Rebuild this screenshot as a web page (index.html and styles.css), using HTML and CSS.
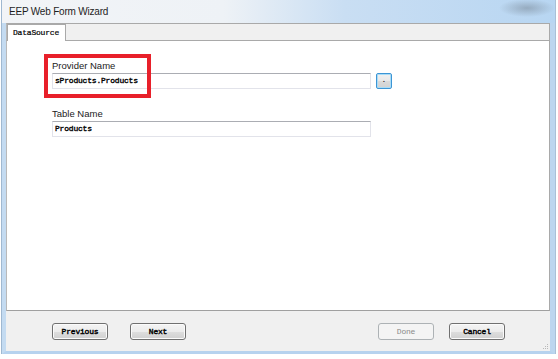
FILE: index.html
```html
<!DOCTYPE html>
<html>
<head>
<meta charset="utf-8">
<link rel="stylesheet" href="styles.css">
</head>
<body>
<div class="window">
  <div class="titlebar">
    <span class="title">EEP Web Form Wizard</span>
    <span class="controls"></span>
  </div>
  <div class="client">
    <div class="tabs">
      <div class="tab">DataSource</div>
    </div>
    <div class="panel">
      <div class="field">
        <div class="label">Provider Name</div>
        <div class="row">
          <div class="input">sProducts.Products</div>
          <div class="dots">.</div>
        </div>
      </div>
      <div class="field second">
        <div class="label">Table Name</div>
        <div class="row">
          <div class="input">Products</div>
        </div>
      </div>
      <div class="highlight"></div>
    </div>
    <div class="footer">
      <div class="group">
        <div class="btn">Previous</div>
        <div class="btn next">Next</div>
      </div>
      <div class="group">
        <div class="btn disabled">Done</div>
        <div class="btn cancel">Cancel</div>
      </div>
      <svg class="grip" width="7" height="7" viewBox="0 0 7 7">
        <rect x="5" y="1" width="1" height="1" fill="#b8b8b8"/>
        <rect x="3" y="3" width="1" height="1" fill="#b8b8b8"/>
        <rect x="5" y="3" width="1" height="1" fill="#b8b8b8"/>
        <rect x="1" y="5" width="1" height="1" fill="#b8b8b8"/>
        <rect x="3" y="5" width="1" height="1" fill="#b8b8b8"/>
        <rect x="5" y="5" width="1" height="1" fill="#b8b8b8"/>
      </svg>
    </div>
  </div>
</div>
</body>
</html>
```
FILE: styles.css
```css
html, body {
  margin: 0;
  padding: 0;
  background: #ffffff;
}

.window {
  box-sizing: border-box;
  margin-left: 2px;
  width: 553px;
  height: 354px;
  display: flex;
  flex-direction: column;
  border-left: 4px solid #c4dbf1;
  border-right: 5px solid #bcd6ef;
  border-bottom: 3px solid #b6d2ee;
  box-shadow: -1px 0 0 #9fb8d1, 1px 0 0 #a9c0d6, 0 1px 0 #9fb8d1;
  background: linear-gradient(to right, #eef1f5 0%, #eef1f5 45%, #cfe2f4 70%, #bcd8f2 100%);
}

.titlebar {
  position: relative;
  height: 23px;
  margin-left: -4px;
  margin-right: -5px;
  padding-left: 7px;
  display: flex;
  align-items: center;
  background:
    radial-gradient(ellipse 28px 9px at 525px 8px, rgba(120,135,150,0.55), rgba(120,135,150,0) 100%),
    linear-gradient(to right, #f2f4f7 0%, #eef2f6 40%, #c9def3 62%, #b8d6f2 100%);
}

.title {
  font-family: "Liberation Sans", Arial, sans-serif;
  font-size: 10px;
  letter-spacing: -0.2px;
  color: #1e1e1e;
  margin-top: -1px;
}

.client {
  flex: 1;
  display: flex;
  flex-direction: column;
  background: #f0f0f0;
}

.tabs {
  box-sizing: border-box;
  height: 18px;
  border-top: 1px solid #a9a9a9;
  border-left: 1px solid #b9b9b9;
  border-right: 1px solid #a9a9a9;
  border-bottom: 1px solid #a9a9a9;
  background: #f0f0f0;
  display: flex;
  align-items: flex-end;
}

.tab {
  box-sizing: border-box;
  height: 17px;
  margin-bottom: -1px;
  width: 59px;
  border: 1px solid #a9a9a9;
  border-bottom: none;
  background: #ffffff;
  font-family: "Liberation Mono", monospace;
  font-size: 8px;
  letter-spacing: -0.2px;
  color: #000;
  -webkit-text-stroke: 0.2px #000;
  padding-left: 5px;
  padding-top: 3px;
  position: relative;
}

.panel {
  position: relative;
  box-sizing: border-box;
  height: 270px;
  background: #ffffff;
  border-left: 1px solid #b9b9b9;
  border-right: 1px solid #a9a9a9;
  border-bottom: 1px solid #a0a0a0;
  padding-top: 19px;
  padding-left: 45px;
}

.field.second {
  margin-top: 19px;
}

.label {
  height: 12px;
  line-height: 12px;
  margin-bottom: 1px;
  font-family: "Liberation Sans", Arial, sans-serif;
  font-size: 9.5px;
  color: #222;
}

.row {
  display: flex;
  align-items: center;
}

.input {
  box-sizing: border-box;
  width: 319px;
  height: 16px;
  border: 1px solid #e2e3ea;
  border-top-color: #abadb3;
  background: #fff;
  font-family: "Liberation Mono", monospace;
  font-size: 8px;
  letter-spacing: -0.2px;
  color: #000;
  -webkit-text-stroke: 0.35px #000;
  line-height: 14px;
  padding-left: 2px;
}

.dots {
  box-sizing: border-box;
  width: 16px;
  height: 16px;
  margin-left: 5px;
  border: 1px solid #3c95d5;
  border-radius: 2px;
  box-shadow: inset 0 0 0 1px #a9dcf7;
  background: linear-gradient(to bottom, #f1f1f1 0%, #e8e8e8 50%, #dadada 51%, #d2d2d2 100%);
  font-family: "Liberation Mono", monospace;
  font-size: 8px;
  font-weight: bold;
  color: #333;
  text-align: center;
  line-height: 12px;
}

.highlight {
  position: absolute;
  left: 37px;
  top: 13px;
  width: 107px;
  height: 44px;
  box-sizing: border-box;
  border: 4px solid #e8202a;
}

.footer {
  position: relative;
  flex: 1;
  display: flex;
  justify-content: space-between;
  align-items: flex-start;
  padding: 12px 45px 0 46px;
  background: #f0f0f0;
}

.group {
  display: flex;
}

.btn {
  box-sizing: border-box;
  width: 56px;
  height: 17px;
  border: 1px solid #707070;
  border-radius: 3px;
  background: linear-gradient(to bottom, #f4f4f4 0%, #ececec 50%, #dedede 51%, #d0d0d0 100%);
  box-shadow: inset 0 0 0 1px #fbfbfb;
  font-family: "Liberation Mono", monospace;
  font-size: 8px;
  letter-spacing: -0.2px;
  color: #000;
  -webkit-text-stroke: 0.4px #000;
  text-align: center;
  line-height: 15px;
}

.btn.next {
  margin-left: 22px;
}

.btn.cancel {
  margin-left: 15px;
}

.btn.disabled {
  border-color: #adb2b5;
  background: #f4f4f4;
  box-shadow: none;
  color: #8a8a8a;
  -webkit-text-stroke: 0;
}

.grip {
  position: absolute;
  right: 1px;
  bottom: 1px;
}
```
